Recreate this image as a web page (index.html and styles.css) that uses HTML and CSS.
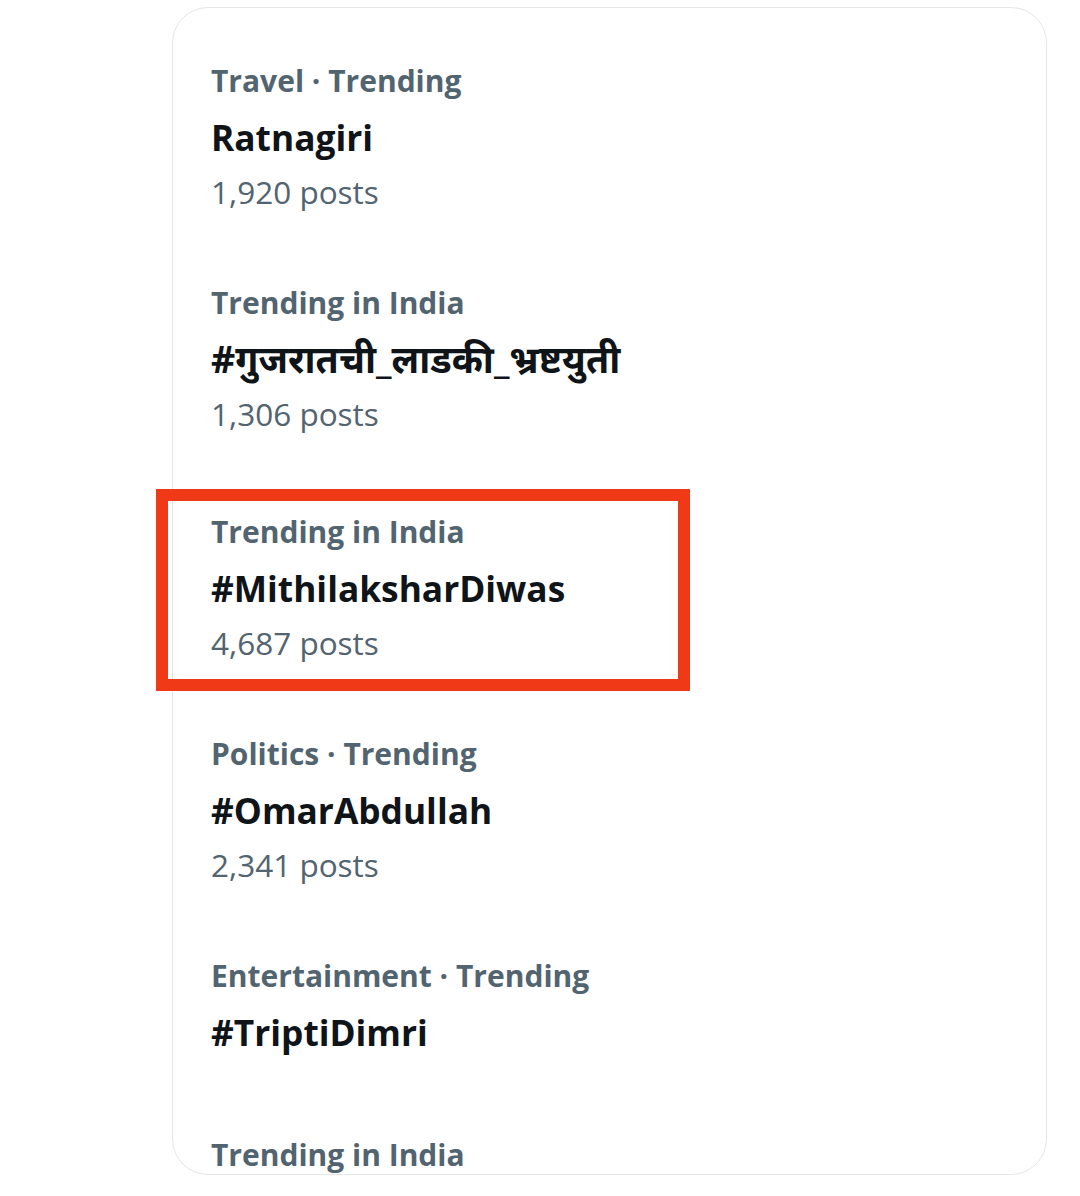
FILE: index.html
```html
<!DOCTYPE html>
<html>
<head>
<meta charset="utf-8">
<link rel="stylesheet" href="styles.css">
</head>
<body>
<div class="card">
  <div class="trend">
    <div class="label">Travel · Trending</div>
    <div class="title">Ratnagiri</div>
    <div class="posts">1,920 posts</div>
  </div>
  <div class="trend deva">
    <div class="label">Trending in India</div>
    <div class="title">#गुजरातची_लाडकी_भ्रष्टयुती</div>
    <div class="posts">1,306 posts</div>
  </div>
  <div class="trend highlighted">
    <div class="label">Trending in India</div>
    <div class="title">#MithilaksharDiwas</div>
    <div class="posts">4,687 posts</div>
    <div class="mark"></div>
  </div>
  <div class="trend">
    <div class="label">Politics · Trending</div>
    <div class="title">#OmarAbdullah</div>
    <div class="posts">2,341 posts</div>
  </div>
  <div class="trend noposts">
    <div class="label">Entertainment · Trending</div>
    <div class="title">#TriptiDimri</div>
  </div>
  <div class="trend last">
    <div class="label">Trending in India</div>
  </div>
</div>
</body>
</html>
```

FILE: styles.css
```css
html, body {
  margin: 0;
  padding: 0;
  background: #ffffff;
}
body {
  width: 1080px;
  height: 1196px;
  overflow: hidden;
  font-family: "Open Sans", "Noto Sans", "Noto Sans Devanagari", sans-serif;
}
.card {
  margin: 7px 0 0 172px;
  width: 875px;
  height: 1168px;
  border: 1px solid #e3e5e8;
  border-radius: 36px;
  box-sizing: border-box;
  padding: 45px 0 0 38px;
}
.trend {
  position: relative;
  margin-bottom: 56px;
}
.trend.deva {
  margin-bottom: 63px;
}
.trend.noposts {
  margin-bottom: 67px;
}
.trend.last {
  margin-bottom: 0;
}
.label {
  font-size: 30px;
  font-weight: 700;
  color: #536471;
  line-height: 56px;
}
.title {
  font-size: 35.3px;
  font-weight: 700;
  color: #0f1419;
  line-height: 56px;
}
.deva .title {
  font-size: 37.6px;
}
.posts {
  font-size: 31.5px;
  font-weight: 400;
  color: #536471;
  line-height: 54px;
}
.mark {
  position: absolute;
  top: -15px;
  left: -55px;
  width: 534px;
  height: 202px;
  box-sizing: border-box;
  border: 12px solid #f03a17;
}
```
